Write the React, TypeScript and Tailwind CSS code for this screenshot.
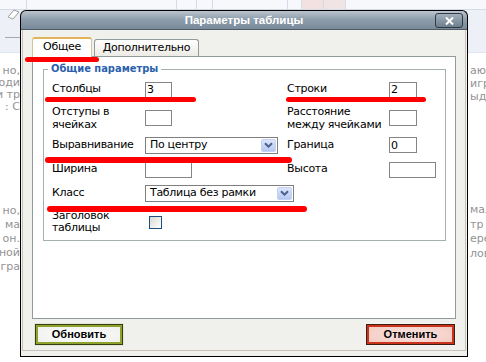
import React from 'react';

const leftTop = ['но,', 'оди', 'и тр', ': С'];
const leftBottom = ['но,', ' ма', 'он.', 'ной', 'гра'];
const rightTop = ['ают', 'игр', 'ыде'];
const rightBottom = ['мал', 'тр', 'ере', 'лов'];

function TextInput({ w, value }: { w: string; value?: string }) {
  return (
    <input
      readOnly
      defaultValue={value}
      className={`${w} h-[16px] border border-[#858585] bg-white px-[1px] text-[11px] leading-[14px] outline-none`}
    />
  );
}

function Select({ w, value }: { w: string; value: string }) {
  return (
    <div className={`${w} h-[17px] border border-[#7f7f7f] bg-white flex items-center pl-[4px] pr-[1px]`}>
      <span className="flex-1 whitespace-nowrap">{value}</span>
      <div className="w-[15px] h-[13px] rounded-[2px] border border-[#c3d1f3] bg-[linear-gradient(#dbe5fc,#b7c8f1)] flex items-center justify-center">
        <svg width="9" height="6" viewBox="0 0 9 6">
          <path d="M1 1.2 L4.5 4.6 L8 1.2" fill="none" stroke="#4a5f8c" strokeWidth="2" />
        </svg>
      </div>
    </div>
  );
}

function Mark({ className }: { className: string }) {
  return <div className={`absolute bg-[#ff0000] rounded-full ${className}`} />;
}

export default function App() {
  return (
    <div className="relative w-[486px] h-[362px] overflow-hidden bg-white font-['DejaVu_Sans',sans-serif]">
      {/* страница за окном */}
      <div className="flex flex-col h-full">
        <div className="h-[53px] bg-[#edf1f7] border-b border-[#dfe5ee] flex flex-col">
          <div className="h-[10px] flex border-b border-[#d5dce7] bg-[#f6f8fb]">
            <div className="w-[27px] border-r border-[#d5dce7]" />
            <div className="w-[150px] border-r border-[#d5dce7]" />
            <div className="w-[20px] border-r border-[#d5dce7]" />
            <div className="w-[16px] border-r border-[#d5dce7]" />
            <div className="w-[75px] border-r border-[#d5dce7]" />
            <div className="w-[14px] border-r border-[#d5dce7]" />
            <div className="w-[22px] border-r border-[#d5dce7] bg-[#f3e0e0]" />
            <div className="w-[22px] border-r border-[#d5dce7] bg-[#f1e4e4]" />
            <div className="flex-1" />
          </div>
          <div className="flex-1 flex">
            <div className="w-[20px] flex flex-col">
              <svg width="20" height="12" viewBox="0 0 20 12" className="-mt-[2px]">
                <path d="M8 9 L14 2 L19 4 L13 11 Z" fill="#fff" stroke="#9a9a9a" strokeWidth="1" />
                <path d="M8 9 L13 11" stroke="#c0c0c0" />
              </svg>
              <div className="mt-[17px] ml-[5px] h-px bg-[#a8a8a8]" />
            </div>
          </div>
        </div>
        <div className="flex justify-between flex-1 text-[11px] text-[#939393]">
          <div className="w-[20px] flex flex-col overflow-hidden pt-[12px]">
            {leftTop.map((t, i) => (
              <div key={i} className="h-[12px] leading-[12px] flex justify-end whitespace-pre">{t}</div>
            ))}
            <div className="mt-[91px]" />
            {leftBottom.map((t, i) => (
              <div key={i} className="h-[14px] leading-[14px] flex justify-end whitespace-pre">{t}</div>
            ))}
          </div>
          <div className="w-[18px] flex flex-col overflow-hidden pt-[11px] pl-[2px]">
            {rightTop.map((t, i) => (
              <div key={i} className="h-[13px] leading-[13px] whitespace-pre">{t}</div>
            ))}
            <div className="mt-[100px]" />
            {rightBottom.map((t, i) => (
              <div key={i} className="h-[14.5px] leading-[14.5px] whitespace-pre">{t}</div>
            ))}
          </div>
        </div>
      </div>

      {/* окно "Параметры таблицы" */}
      <div className="absolute left-[20px] top-[10px] w-[448px] h-[347px] flex flex-col text-[11px] tracking-[-0.3px] text-black">
        <div className="h-[20px] flex items-center rounded-t-[6px] border border-b-0 border-black bg-[linear-gradient(#bac4cd,#8e9dab_45%,#77889a)] shadow-[inset_0_-1px_0_#4f5c68]">
          <div className="w-[32px]" />
          <div className="flex-1 text-center text-white font-bold text-[11.5px] tracking-normal font-['Liberation_Sans',sans-serif]">
            Параметры таблицы
          </div>
          <div className="w-[28px] h-[15px] mr-[4px] rounded-[3px] border border-[#2f3a44] bg-[linear-gradient(#a3b0bc,#6d7e8c)] flex items-center justify-center">
            <svg width="9" height="8" viewBox="0 0 9 8">
              <path d="M1 0.5 L8 7.5 M8 0.5 L1 7.5" stroke="#fff" strokeWidth="2" />
            </svg>
          </div>
        </div>

        <div className="flex-1 bg-[#f0f0ec] border border-t-0 border-black flex flex-col">
          <div className="flex-1 mx-[1px] mb-[5px] border border-t-0 border-[#c8c2b8] flex flex-col px-[9px] pt-[7px]">
            {/* вкладки */}
            <div className="flex items-end gap-[2px] h-[19px] relative z-10">
              <div className="w-[60px] h-[20px] -mb-[1px] bg-white rounded-t-[3px] border border-b-0 border-[#d6c49c] border-t-2 border-t-[#e3b35c] flex items-center justify-center pb-[2px]">
                Общее
              </div>
              <div className="w-[105px] h-[17px] rounded-t-[3px] border border-b-0 border-[#919b9c] bg-[linear-gradient(#ffffff,#ecebe5)] flex items-center justify-center">
                Дополнительно
              </div>
            </div>

            <div className="h-[263px] bg-white border border-[#919b9c] pt-[5px] pl-[10px] pr-[9px]">
              <fieldset className="border border-[#a6afaf] px-[8px]">
                <legend className="-ml-[4px] px-[3px] leading-[14px] font-bold tracking-normal text-[#2b5fae] font-['DejaVu_Sans_Condensed','DejaVu_Sans',sans-serif]">
                  Общие параметры
                </legend>
                <div className="grid grid-cols-[93px_142px_102px_1fr] grid-rows-[27px_30px_24px_25px_22px_36px] items-center">
                  <div>Столбцы</div>
                  <TextInput w="w-[27px]" value="3" />
                  <div>Строки</div>
                  <TextInput w="w-[28px]" value="2" />

                  <div className="leading-[13px]">Отступы в<br />ячейках</div>
                  <TextInput w="w-[27px]" />
                  <div className="leading-[13px]">Расстояние<br />между ячейками</div>
                  <TextInput w="w-[28px]" />

                  <div>Выравнивание</div>
                  <Select w="w-[133px]" value="По центру" />
                  <div>Граница</div>
                  <TextInput w="w-[28px]" value="0" />

                  <div>Ширина</div>
                  <TextInput w="w-[47px]" />
                  <div>Высота</div>
                  <TextInput w="w-[47px]" />

                  <div>Класс</div>
                  <div className="col-span-3">
                    <Select w="w-[149px]" value="Таблица без рамки" />
                  </div>

                  <div className="leading-[12px]">Заголовок<br />таблицы</div>
                  <div className="col-span-3">
                    <div className="ml-[4px] w-[13px] h-[13px] border border-[#1c5180] bg-[linear-gradient(135deg,#d9d9d2,#ffffff)]" />
                  </div>
                </div>
              </fieldset>
            </div>

            {/* кнопки */}
            <div className="flex justify-between pt-[5px] pl-[3px] pr-[1px] font-['Liberation_Sans',sans-serif] font-bold tracking-normal">
              <button className="w-[88px] h-[21px] border border-[#34400f] shadow-[0_0_0_1px_#e4e4dc,inset_0_0_0_2px_#8da32c] bg-[radial-gradient(ellipse_at_center,#ffffff,#ededea)] text-black text-[11px] leading-none">
                Обновить
              </button>
              <button className="w-[89px] h-[21px] border border-[#3d1d12] shadow-[0_0_0_1px_#f4f4f4,inset_0_0_0_2px_#c9341b] bg-[radial-gradient(ellipse_at_center,#fbe6e1,#f2c6bd)] text-black text-[11px] leading-none">
                Отменить
              </button>
            </div>
          </div>
        </div>
      </div>

      {/* красные пометки */}
      <Mark className="left-[25px] top-[57px] w-[74px] h-[5px]" />
      <Mark className="left-[45px] top-[97px] w-[151px] h-[5px]" />
      <Mark className="left-[286px] top-[97px] w-[140px] h-[5px]" />
      <Mark className="left-[45px] top-[157px] w-[247px] h-[6px]" />
      <Mark className="left-[47px] top-[206px] w-[260px] h-[6px]" />
    </div>
  );
}
